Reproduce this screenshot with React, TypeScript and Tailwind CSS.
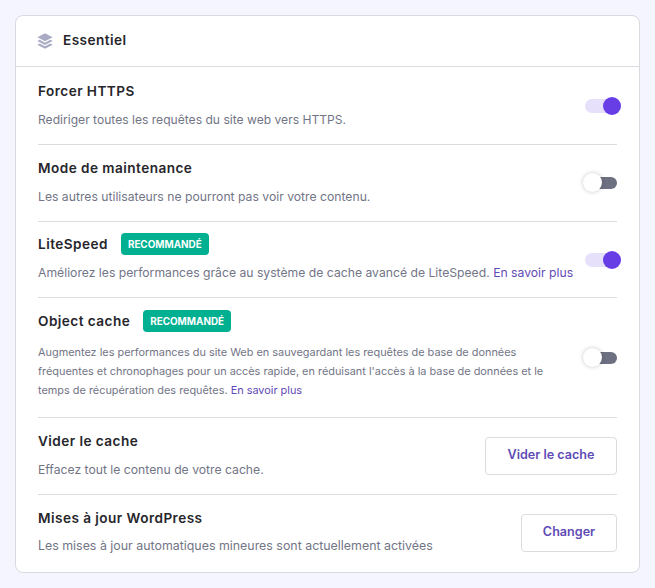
import React from "react";

const font = "font-['Inter','Liberation_Sans',sans-serif]";

const Badge = () => (
    <span className="flex h-[22px] items-center rounded-[4px] bg-[#00b090] px-[7px] text-[9.9px] font-bold text-white">
        RECOMMANDÉ
    </span>
);

const Toggle = ({ on }: { on: boolean }) =>
    on ? (
        <div className="relative mr-[-4px] h-[14px] w-[36px] shrink-0 rounded-full bg-[#e6e0fa]">
            <div className="absolute right-0 top-[-2px] h-[18px] w-[18px] rounded-full bg-[#673de6]" />
        </div>
    ) : (
        <div className="relative h-[12px] w-[32px] shrink-0 rounded-full bg-[#6d7081]">
            <div className="absolute left-[-2px] top-[-4px] h-[19px] w-[19px] rounded-full bg-white shadow-[0_0_4px_rgba(29,30,32,0.25)]" />
        </div>
    );

const Row = ({
    title,
    badge,
    height,
    last,
    children,
    right,
}: {
    title: string;
    badge?: boolean;
    height: string;
    last?: boolean;
    children: React.ReactNode;
    right: React.ReactNode;
}) => (
    <div className={`flex items-center justify-between ${height} ${last ? "" : "border-b border-[#dadce0]"}`}>
        <div className="min-w-0">
            <div className="flex h-[22px] items-center gap-[13px]">
                <span className="text-[13.6px] font-semibold tracking-[0.45px] text-[#26262b]">{title}</span>
                {badge && <Badge />}
            </div>
            {children}
        </div>
        {right}
    </div>
);

const Button = ({ label, width }: { label: string; width: string }) => (
    <button className={`h-[38px] ${width} rounded-[4px] border border-[#dadce0] bg-white pb-[2px] text-[12.6px] font-semibold text-[#5f4bb6]`}>
        {label}
    </button>
);

const App: React.FC = () => {
    return (
        <div className={`${font} min-h-[588px] bg-[#f4f5ff] px-[15px] pt-[15px]`}>
            <div className="h-[558px] w-[625px] rounded-[8px] border border-[#d8dae0] bg-white">
                <div className="flex h-[51px] items-center gap-[10px] border-b border-[#dadce0] px-[21px]">
                    <svg width="16" height="16" viewBox="1 1 22 22" fill="#a9abc4">
                        <path d="M12 1.5 1.5 7 12 12.5 22.5 7 12 1.5Z" />
                        <path d="M4.6 10.4 1.5 12 12 17.5 22.5 12l-3.1-1.6L12 14.3 4.6 10.4Z" />
                        <path d="M4.6 15.4 1.5 17 12 22.5 22.5 17l-3.1-1.6L12 19.3 4.6 15.4Z" />
                    </svg>
                    <span className="pb-[2px] text-[13.6px] font-semibold tracking-[0.45px] text-[#26262b]">Essentiel</span>
                </div>
                <div className="px-[22px]">
                    <Row title="Forcer HTTPS" height="h-[78px]" right={<Toggle on />}>
                        <p className="mb-[1px] mt-[9px] text-[12.1px] text-[#727586]">Rediriger toutes les requêtes du site web vers HTTPS.</p>
                    </Row>
                    <Row title="Mode de maintenance" height="h-[77px]" right={<Toggle on={false} />}>
                        <p className="mb-[3px] mt-[9px] text-[12.2px] text-[#727586]">Les autres utilisateurs ne pourront pas voir votre contenu.</p>
                    </Row>
                    <Row title="LiteSpeed" badge height="h-[76px]" right={<Toggle on />}>
                        <p className="mb-[3px] mt-[9px] whitespace-nowrap text-[12.2px] text-[#727586]">
                            Améliorez les performances grâce au système de cache avancé de LiteSpeed.{" "}
                            <span className="text-[#5f4bb6]">En savoir plus</span>
                        </p>
                    </Row>
                    <Row title="Object cache" badge height="h-[120px]" right={<Toggle on={false} />}>
                        <p className="mb-[5px] mt-[11px] w-[525px] text-[10.9px] leading-[19px] text-[#727586]">
                            Augmentez les performances du site Web en sauvegardant les requêtes de base de données fréquentes et chronophages pour un accès rapide, en réduisant l'accès à la base de données et le temps de récupération des requêtes.{" "}
                            <span className="text-[#5f4bb6]">En savoir plus</span>
                        </p>
                    </Row>
                    <Row title="Vider le cache" height="h-[77px]" right={<Button label="Vider le cache" width="w-[132px]" />}>
                        <p className="mb-[3px] mt-[9px] text-[12.2px] text-[#727586]">Effacez tout le contenu de votre cache.</p>
                    </Row>
                    <Row title="Mises à jour WordPress" height="h-[76px]" last right={<Button label="Changer" width="w-[96px]" />}>
                        <p className="mb-[3px] mt-[8px] text-[12.4px] text-[#727586]">Les mises à jour automatiques mineures sont actuellement activées</p>
                    </Row>
                </div>
            </div>
        </div>
    );
};

export default App;
